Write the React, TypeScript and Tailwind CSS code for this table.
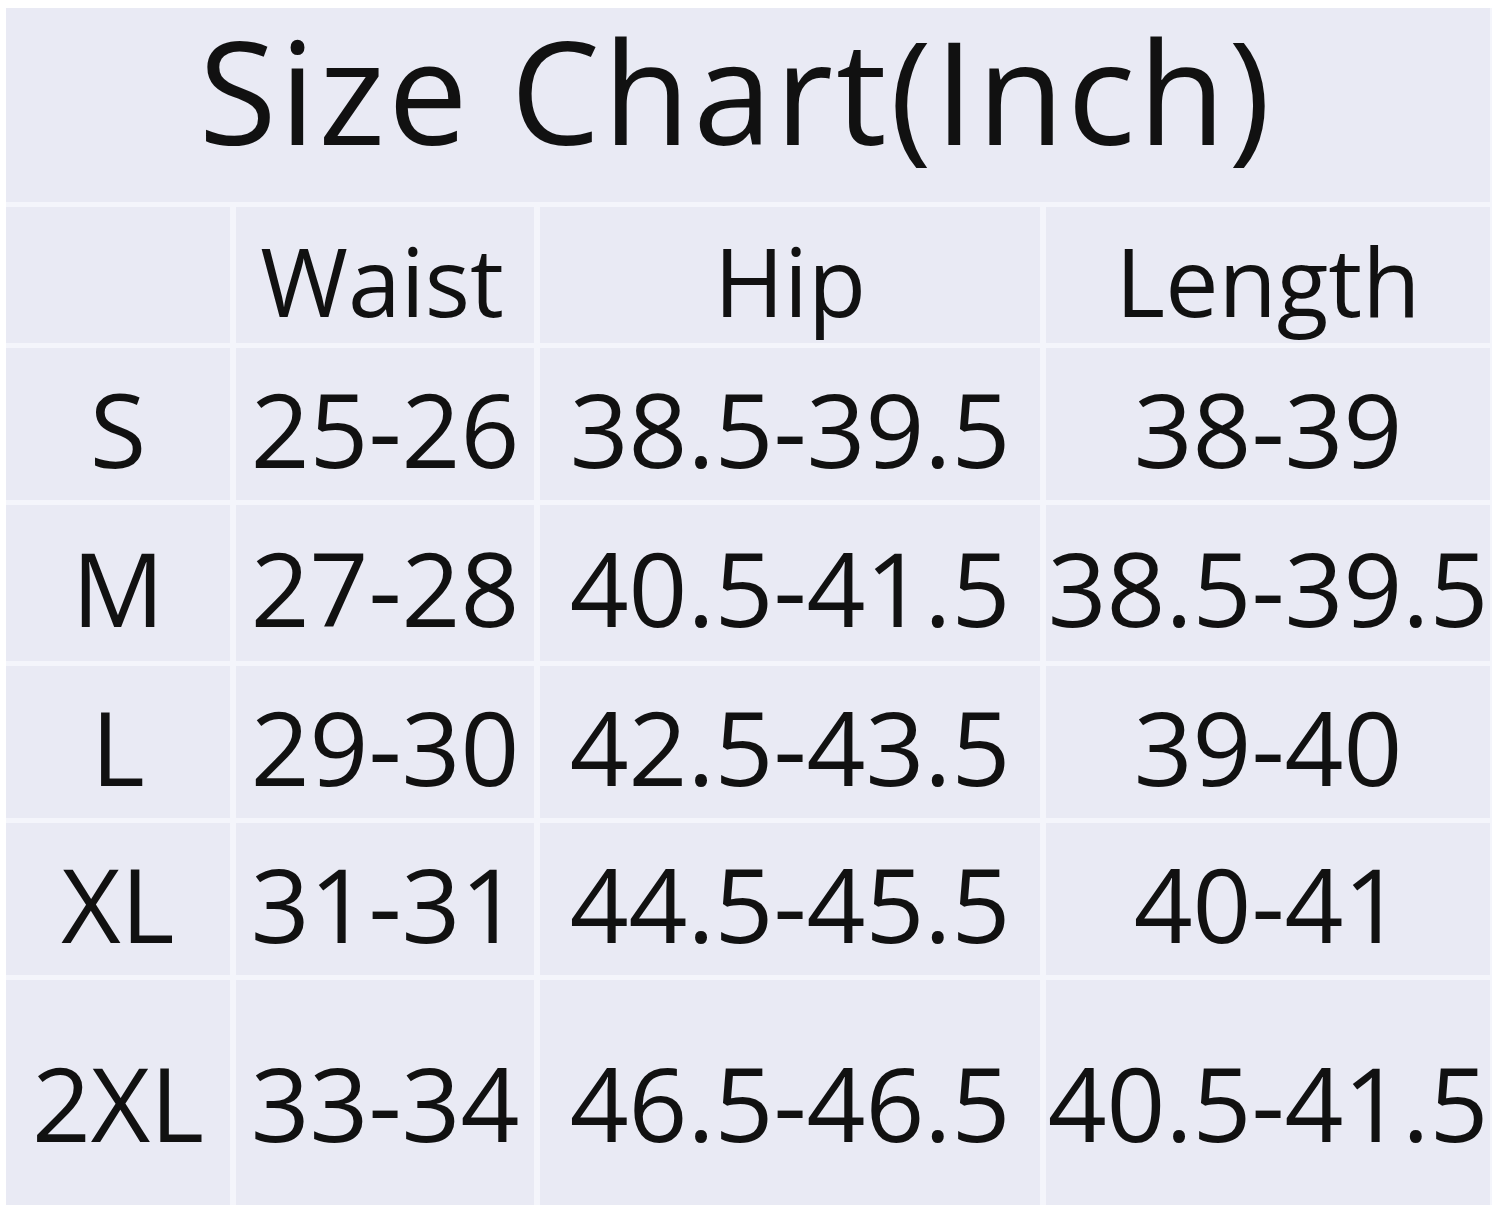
import React from "react";

const rows: { size: string; waist: string; hip: string; length: string; h: string; pt: string }[] = [
  { size: "S", waist: "25-26", hip: "38.5-39.5", length: "38-39", h: "h-[152px]", pt: "pt-[10px]" },
  { size: "M", waist: "27-28", hip: "40.5-41.5", length: "38.5-39.5", h: "h-[156px]", pt: "pt-[10px]" },
  { size: "L", waist: "29-30", hip: "42.5-43.5", length: "39-40", h: "h-[152px]", pt: "pt-[10px]" },
  { size: "XL", waist: "31-31", hip: "44.5-45.5", length: "40-41", h: "h-[152px]", pt: "pt-[10px]" },
  { size: "2XL", waist: "33-34", hip: "46.5-46.5", length: "40.5-41.5", h: "h-[225px]", pt: "pt-[20px]" },
];

const cell = "bg-[#e9eaf4] flex items-center justify-center whitespace-nowrap";
const num = "text-[103px] leading-[1.1] text-[#111111]";

export default function App() {
  return (
    <div
      className="w-[1500px] h-[1215px] bg-white pt-[8px] pl-[6px] pr-[8px] pb-[10px]"
      style={{ fontFamily: '"Open Sans", "Noto Sans", sans-serif' }}
    >
      <div className="grid grid-cols-[224px_298px_500px_444px] gap-x-[6px] gap-y-[5px] bg-[#f4f5fb]">
        <div className={`${cell} col-span-4 h-[194px] pb-[30px] pr-[24px]`}>
          <span className="text-[142px] tracking-[3px] leading-[1.1] text-[#111111]">
            Size Chart(Inch)
          </span>
        </div>

        <div className={`${cell} h-[136px]`} />
        <div className={`${cell} h-[136px]`}>
          <span className="text-[95px] leading-[1.2] text-[#111111] pt-[10px] pr-[6px]">Waist</span>
        </div>
        <div className={`${cell} h-[136px]`}>
          <span className="text-[95px] leading-[1.2] text-[#111111] pt-[10px]">Hip</span>
        </div>
        <div className={`${cell} h-[136px]`}>
          <span className="text-[95px] leading-[1.2] text-[#111111] pt-[10px]">Length</span>
        </div>

        {rows.map((r) => (
          <React.Fragment key={r.size}>
            <div className={`${cell} ${r.h}`}>
              <span className={`${num} ${r.pt}`}>{r.size}</span>
            </div>
            <div className={`${cell} ${r.h}`}>
              <span className={`${num} ${r.pt}`}>{r.waist}</span>
            </div>
            <div className={`${cell} ${r.h}`}>
              <span className={`${num} ${r.pt}`}>{r.hip}</span>
            </div>
            <div className={`${cell} ${r.h}`}>
              <span className={`${num} ${r.pt}`}>{r.length}</span>
            </div>
          </React.Fragment>
        ))}
      </div>
    </div>
  );
}
